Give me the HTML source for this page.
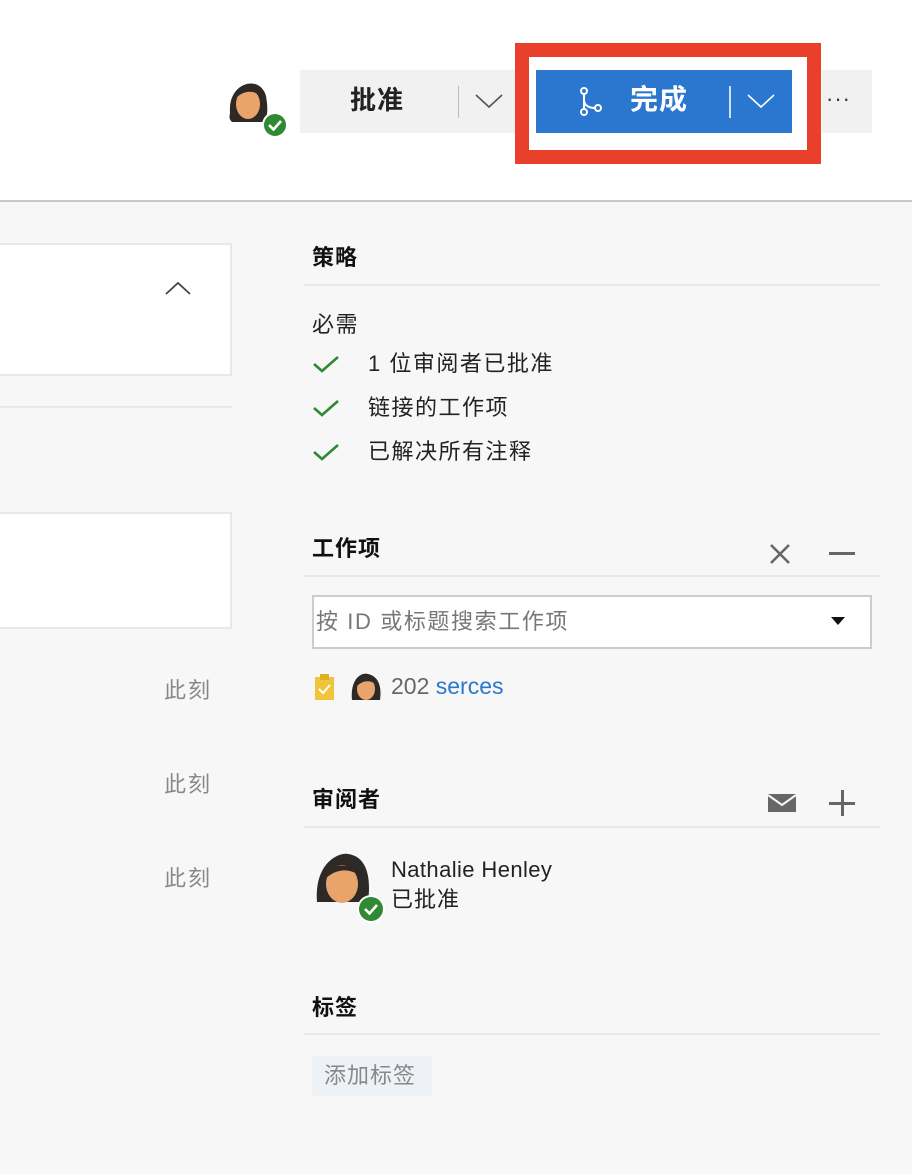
<!DOCTYPE html>
<html><head><meta charset="utf-8"><style>
*{margin:0;padding:0;box-sizing:border-box}
body{width:912px;height:1174px;background:#f7f7f7;font-family:"Liberation Sans","Noto Sans CJK SC",sans-serif;color:#222;position:relative;overflow:hidden}
.a{position:absolute}
.t{position:absolute;white-space:nowrap;line-height:1}
.h{font-weight:bold;font-size:22px;color:#111;letter-spacing:1px}
.line{position:absolute;height:2px;background:#e8e8e8}
.n{font-size:22px;color:#222;letter-spacing:1.5px}
</style></head><body>
<div class="a" style="left:0;top:0;width:912px;height:200px;background:#fff"></div>
<div class="a" style="left:0;top:200px;width:912px;height:2px;background:#c8c8c8"></div>

<svg class="a" style="left:226px;top:72px" width="66" height="70" viewBox="0 0 66 70">
<path d="M4 40 C2 10 34 2 40 24 C42 36 42 44 38 50 L6 50 C2 46 4 44 4 40Z" fill="#2d2926"/>
<ellipse cx="22" cy="32" rx="12" ry="15" fill="#e9a46c"/>
<path d="M10 22 C14 12 30 12 34 24 C28 18 18 18 10 26Z" fill="#2d2926"/>
<circle cx="49" cy="53" r="13" fill="#fff"/><circle cx="49" cy="53" r="11" fill="#2f8a33"/>
<path d="M43 53 L47.5 57.5 L55 49" stroke="#fff" stroke-width="2.6" fill="none"/>
</svg>

<div class="a" style="left:300px;top:70px;width:215px;height:63px;background:#f1f1f1"></div>
<div class="t" style="left:350px;top:87px;font-size:26px;font-weight:bold;color:#222;letter-spacing:1px">批准</div>
<div class="a" style="left:458px;top:86px;width:1px;height:32px;background:#bbb"></div>
<svg class="a" style="left:474px;top:92px" width="30" height="18"><path d="M2 3 L15 15 L28 3" stroke="#555" stroke-width="1.6" fill="none"/></svg>

<div class="a" style="left:515px;top:43px;width:306px;height:121px;border:14px solid #e8402a;background:#fff"></div>
<div class="a" style="left:536px;top:70px;width:256px;height:63px;background:#2b77d0"></div>
<svg class="a" style="left:578px;top:86px" width="28" height="32" viewBox="0 0 28 32">
<g stroke="#fff" stroke-width="2" fill="none"><circle cx="6" cy="5" r="3"/><circle cx="6" cy="26" r="3"/><circle cx="20" cy="22" r="3"/><path d="M6 8 L6 23 M6 14 C6 20 12 22 17 22"/></g></svg>
<div class="t" style="left:630px;top:86px;font-size:28px;font-weight:bold;color:#fff;letter-spacing:1px">完成</div>
<div class="a" style="left:729px;top:86px;width:2px;height:32px;background:#cfe0f5"></div>
<svg class="a" style="left:746px;top:92px" width="30" height="18"><path d="M2 3 L15 15 L28 3" stroke="#fff" stroke-width="1.6" fill="none"/></svg>

<div class="a" style="left:822px;top:70px;width:50px;height:63px;background:#f1f1f1"></div>
<div class="t" style="left:826px;top:88px;font-size:22px;color:#333;letter-spacing:1px">···</div>

<div class="a" style="left:-2px;top:243px;width:234px;height:133px;background:#fff;border:2px solid #e8e8e8"></div>
<svg class="a" style="left:164px;top:280px" width="28" height="16"><path d="M2 14 L14 3 L26 14" stroke="#444" stroke-width="1.8" fill="none"/></svg>
<div class="line" style="left:0;top:406px;width:232px"></div>
<div class="a" style="left:-2px;top:512px;width:234px;height:117px;background:#fff;border:2px solid #e8e8e8"></div>
<div class="t" style="left:164px;top:680px;font-size:22px;color:#888;letter-spacing:2px">此刻</div>
<div class="t" style="left:164px;top:774px;font-size:22px;color:#888;letter-spacing:2px">此刻</div>
<div class="t" style="left:164px;top:868px;font-size:22px;color:#888;letter-spacing:2px">此刻</div>

<div class="t h" style="left:312px;top:247px">策略</div>
<div class="line" style="left:304px;top:284px;width:576px"></div>
<div class="t n" style="left:312px;top:314px">必需</div>
<svg class="a" style="left:312px;top:354px" width="30" height="20"><path d="M2 10 L10 17 L26 3" stroke="#2f8a33" stroke-width="2.6" fill="none"/></svg>
<div class="t n" style="left:368px;top:353px">1 位审阅者已批准</div>
<svg class="a" style="left:312px;top:398px" width="30" height="20"><path d="M2 10 L10 17 L26 3" stroke="#2f8a33" stroke-width="2.6" fill="none"/></svg>
<div class="t n" style="left:368px;top:397px">链接的工作项</div>
<svg class="a" style="left:312px;top:442px" width="30" height="20"><path d="M2 10 L10 17 L26 3" stroke="#2f8a33" stroke-width="2.6" fill="none"/></svg>
<div class="t n" style="left:368px;top:441px">已解决所有注释</div>

<div class="t h" style="left:312px;top:538px">工作项</div>
<svg class="a" style="left:768px;top:542px" width="24" height="24"><path d="M3 3 L21 21 M21 3 L3 21" stroke="#666" stroke-width="2.6"/></svg>
<div class="a" style="left:829px;top:552px;width:26px;height:3px;background:#666"></div>
<div class="line" style="left:304px;top:575px;width:576px"></div>
<div class="a" style="left:312px;top:595px;width:560px;height:54px;background:#fff;border:2px solid #ccc"></div>
<div class="t" style="left:316px;top:611px;font-size:22px;color:#777;letter-spacing:1.6px">按 ID 或标题搜索工作项</div>
<svg class="a" style="left:830px;top:616px" width="16" height="10"><path d="M1 1 L15 1 L8 9Z" fill="#111"/></svg>

<svg class="a" style="left:314px;top:673px" width="22" height="28" viewBox="0 0 22 28"><rect x="1" y="4" width="19" height="23" fill="#f0c53a"/><rect x="6" y="1" width="9" height="6" fill="#e0b020"/><path d="M5 16 L9 20 L16 12" stroke="#fff" stroke-width="2" fill="none"/></svg>
<svg class="a" style="left:350px;top:670px" width="32" height="32" viewBox="0 0 32 32"><path d="M2 30 C0 8 12 2 18 4 C28 6 32 16 30 30Z" fill="#2d2926"/><ellipse cx="16" cy="19" rx="9" ry="11" fill="#e9a46c"/><path d="M7 14 C10 6 22 6 26 14 C20 10 13 10 7 16Z" fill="#2d2926"/></svg>
<div class="t" style="left:391px;top:675px;font-size:23px;color:#666">202 <span style="color:#2b77d0">serces</span></div>

<div class="t h" style="left:312px;top:789px">审阅者</div>
<svg class="a" style="left:767px;top:792px" width="30" height="22"><rect x="1" y="2" width="28" height="18" fill="#666"/><path d="M1 3 L15 13 L29 3" stroke="#f7f7f7" stroke-width="2" fill="none"/></svg>
<div class="a" style="left:829px;top:802px;width:26px;height:3px;background:#666"></div>
<div class="a" style="left:841px;top:790px;width:3px;height:26px;background:#666"></div>
<div class="line" style="left:304px;top:826px;width:576px"></div>

<svg class="a" style="left:314px;top:852px" width="72" height="72" viewBox="0 0 72 72">
<path d="M3 50 C0 12 24 0 34 2 C50 4 58 20 54 50 L3 50Z" fill="#2d2926"/>
<ellipse cx="28" cy="32" rx="16" ry="19" fill="#e9a46c"/>
<path d="M10 24 C16 10 40 10 46 24 C36 16 22 16 10 28Z" fill="#2d2926"/>
<circle cx="57" cy="57" r="14" fill="#fff"/><circle cx="57" cy="57" r="12" fill="#2f8a33"/>
<path d="M51 57 L55.5 61.5 L63 53" stroke="#fff" stroke-width="2.6" fill="none"/>
</svg>
<div class="t" style="left:391px;top:859px;font-size:22px;color:#222;letter-spacing:0.4px">Nathalie Henley</div>
<div class="t" style="left:391px;top:889px;font-size:22px;color:#222;letter-spacing:1px">已批准</div>

<div class="t h" style="left:312px;top:997px">标签</div>
<div class="line" style="left:304px;top:1033px;width:576px"></div>
<div class="a" style="left:312px;top:1056px;width:120px;height:40px;background:#eef2f7"></div>
<div class="t" style="left:324px;top:1065px;font-size:22px;color:#888;letter-spacing:1px">添加标签</div>
</body></html>
